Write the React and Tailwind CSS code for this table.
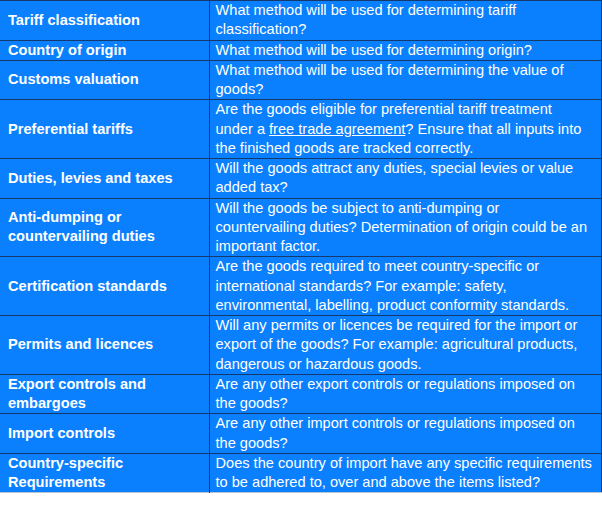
import React from "react";

const rows = [
  ["Tariff classification", ["What method will be used for determining tariff", "classification?"]],
  ["Country of origin", ["What method will be used for determining origin?"]],
  ["Customs valuation", ["What method will be used for determining the value of", "goods?"]],
  [
    "Preferential tariffs",
    [
      "Are the goods eligible for preferential tariff treatment",
      <>
        under a <span className="underline">free trade agreement</span>? Ensure that all inputs into
      </>,
      "the finished goods are tracked correctly.",
    ],
  ],
  ["Duties, levies and taxes", ["Will the goods attract any duties, special levies or value", "added tax?"]],
  [
    "Anti-dumping or countervailing duties",
    [
      "Will the goods be subject to anti-dumping or",
      "countervailing duties? Determination of origin could be an",
      "important factor.",
    ],
  ],
  [
    "Certification standards",
    [
      "Are the goods required to meet country-specific or",
      "international standards? For example: safety,",
      "environmental, labelling, product conformity standards.",
    ],
  ],
  [
    "Permits and licences",
    [
      "Will any permits or licences be required for the import or",
      "export of the goods? For example: agricultural products,",
      "dangerous or hazardous goods.",
    ],
  ],
  ["Export controls and embargoes", ["Are any other export controls or regulations imposed on", "the goods?"]],
  ["Import controls", ["Are any other import controls or regulations imposed on", "the goods?"]],
  [
    "Country-specific Requirements",
    ["Does the country of import have any specific requirements", "to be adhered to, over and above the items listed?"],
  ],
];

export default function App() {
  return (
    <div className="w-[602px] h-[523px] bg-white" style={{ fontFamily: '"Liberation Sans", Arial, sans-serif' }}>
      <table className="w-[602px] border-collapse bg-[#0a80ff] text-white text-[14.6px] leading-[19.25px] border-t border-r border-b border-t-[#15396b] border-r-[#15396b] border-b-[#b8c4d0]">
        <tbody>
          {rows.map(([label, lines], i) => (
            <tr key={i} className={i > 0 ? "border-t border-[#15396b]" : ""}>
              <td className="w-[209px] pl-2 pr-2 align-middle font-bold border-r border-[#15396b]">{label}</td>
              <td className="pl-[6px] pr-1 align-top">
                {lines.map((line, j) => (
                  <span key={j} className="block whitespace-nowrap">
                    {line}
                  </span>
                ))}
              </td>
            </tr>
          ))}
        </tbody>
      </table>
    </div>
  );
}
